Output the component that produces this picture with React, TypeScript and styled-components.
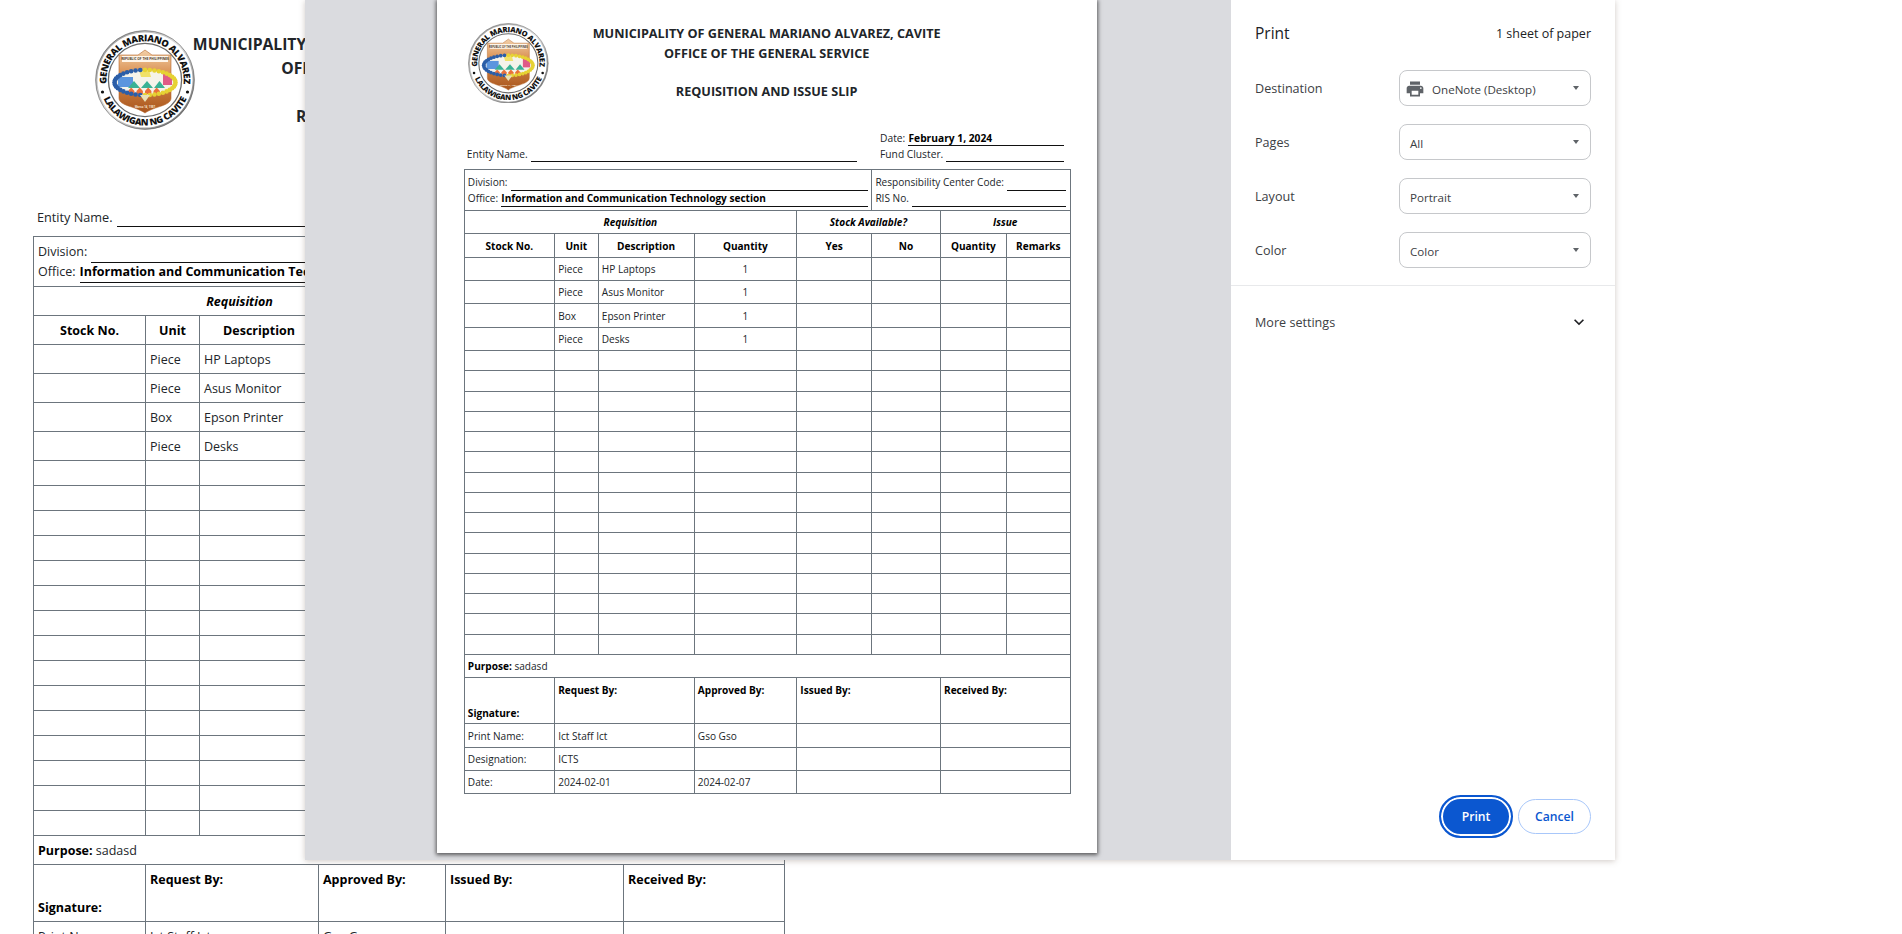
import React from "react";
import styled, { createGlobalStyle } from "styled-components";

const Global = createGlobalStyle`
  html, body { margin: 0; padding: 0; background: #fff; height: 934px; overflow: hidden; }
  #root { height: 934px; overflow: hidden; position: relative; }
  * { box-sizing: border-box; }
`;

const FONT = `"Open Sans", "Noto Sans", "Liberation Sans", sans-serif`;

const DocRoot = styled.div<{ $top: number }>`
  width: 800px;
  padding: ${(p) => p.$top}px 16px 0 33px;
  font: 12.7px/20px ${FONT};
  color: #212529;
`;
const Header = styled.header<{ $height: number }>`
  display: grid;
  height: ${(p) => p.$height}px;
  width: 751px;
`;
const SealSlot = styled.div<{ $left: number }>`
  grid-area: 1 / 1;
  justify-self: start;
  margin-left: ${(p) => p.$left}px;
`;
const Titles = styled.div`
  grid-area: 1 / 1;
  justify-self: center;
  padding-top: 2px;
  text-align: center;
  font-size: 15.7px;
  line-height: 24px;
  font-weight: 700;
  white-space: nowrap;
`;
const Meta = styled.div`
  display: flex;
  align-items: flex-end;
  justify-content: space-between;
  width: 751px;
  height: 40px;
  margin-bottom: 9px;
  padding-left: 4px;
`;
const MetaLeft = styled.div`
  width: 484px;
`;
const MetaRight = styled.div`
  width: 228px;
  margin-right: 7px;
`;
const Line = styled.div`
  display: flex;
  align-items: flex-start;
  height: 20px;
  gap: 4px;
  white-space: nowrap;
`;
const Fill = styled.span`
  flex: 1;
  min-width: 0;
  height: 20px;
  border-bottom: 1px solid #111;
  font-weight: 700;
  color: #000;
  overflow: hidden;
`;
const Stack = styled.div`
  padding-top: 1px;
`;
const Sheet = styled.table`
  width: 751px;
  border-collapse: collapse;
  table-layout: fixed;
  font-size: 12.5px;
  line-height: 18px;
`;
const Cell = styled.td<{ $h?: number; $center?: boolean; $strong?: boolean; $italic?: boolean; $top?: boolean }>`
  border: 1px solid #6c757d;
  padding: 1px 4px 0;
  height: ${(p) => p.$h ?? 25}px;
  text-align: ${(p) => (p.$center ? "center" : "left")};
  font-weight: ${(p) => (p.$strong ? 700 : 400)};
  font-style: ${(p) => (p.$italic ? "italic" : "normal")};
  vertical-align: ${(p) => (p.$top ? "top" : "middle")};
  color: ${(p) => (p.$strong ? "#000" : "#212529")};
  white-space: nowrap;
  overflow: hidden;
`;
const SigHead = styled.div`
  height: 54px;
  padding-top: 5px;
`;
const SigLabel = styled.div`
  height: 54px;
  padding-top: 33px;
`;
const Bold = styled.b`
  color: #000;
  font-weight: 700;
`;

const R_TOP = 38.6;
const dx = (R_TOP * Math.cos(Math.PI / 4)).toFixed(2);
const ringTop = `M ${(50 - +dx).toFixed(2)} ${(50 + +dx).toFixed(2)} A ${R_TOP} ${R_TOP} 0 1 1 ${(50 + +dx).toFixed(2)} ${(50 + +dx).toFixed(2)}`;
const ringBottom = "M 50 50 m -45.6 0 a 45.6 45.6 0 0 0 91.2 0";

function Seal({ size, id }: { size: number; id: string }) {
  const beads = Array.from({ length: 40 }, (_, i) => {
    const a = (i / 40) * Math.PI * 2;
    const cx = 50 + 30.5 * Math.cos(a);
    const cy = 52.5 + 12.6 * Math.sin(a);
    const c = Math.cos(a) < -0.05 ? "#2b5ea8" : "#e6d233";
    return <circle key={i} cx={cx} cy={cy} r={2.3} fill={c} />;
  });
  return (
    <svg width={size} height={size} viewBox="0 0 100 100" style={{ display: "block" }}>
      <defs>
        <linearGradient id={`${id}r`} x1="0" y1="0" x2="1" y2="1">
          <stop offset="0" stopColor="#8a8a8a" />
          <stop offset="0.5" stopColor="#e4e4e4" />
          <stop offset="1" stopColor="#555" />
        </linearGradient>
        <linearGradient id={`${id}s`} x1="0" y1="0" x2="0" y2="1">
          <stop offset="0" stopColor="#f2cfa8" />
          <stop offset="0.4" stopColor="#d88d4d" />
          <stop offset="1" stopColor="#a9551c" />
        </linearGradient>
        <path id={`${id}t`} d={ringTop} />
        <path id={`${id}b`} d={ringBottom} />
      </defs>
      <circle cx="50" cy="50" r="49.4" fill={`url(#${id}r)`} stroke="#444" strokeWidth="0.5" />
      <circle cx="50" cy="50" r="47.6" fill="#fff" />
      <circle cx="50" cy="50" r="36.6" fill="#fff" stroke="#6a6a6a" strokeWidth="1.3" />
      <text fontFamily={`"Open Sans", sans-serif`} fontWeight="800" fontSize="9.3" fill="#111" letterSpacing="-0.4">
        <textPath href={`#${id}t`} startOffset="50%" textAnchor="middle">GENERAL MARIANO ALVAREZ</textPath>
      </text>
      <text fontFamily={`"Open Sans", sans-serif`} fontWeight="800" fontSize="9.2" fill="#111" letterSpacing="-0.3">
        <textPath href={`#${id}b`} startOffset="50%" textAnchor="middle">LALAWIGAN NG CAVITE</textPath>
      </text>
      <circle cx="7.5" cy="62" r="1.6" fill="#111" />
      <circle cx="92.5" cy="62" r="1.6" fill="#111" />
      <path d="M24 25 H43 L50 20 L57 25 H76 V68 C76 76 60 76 50 83 C40 76 24 76 24 68 Z" fill={`url(#${id}s)`} stroke="#b76a30" strokeWidth="0.6" />
      <rect x="27" y="26" width="46" height="6" fill="#fff6ea" />
      <text x="50" y="30.4" textAnchor="middle" fontFamily={`"Open Sans", sans-serif`} fontWeight="700" fontSize="3.2" fill="#4a3526">REPUBLIC OF THE PHILIPPINES</text>
      <ellipse cx="50" cy="52.5" rx="30" ry="12.5" fill="#f5f3ea" />
      <path d="M23 47 h15 v10 h-15 z" fill="#5b95de" />
      <path d="M44 40 l2 7 h10 l-2 -7 z" fill="#f0e168" />
      <path d="M42 41 l3 -3 l3 3 z" fill="#3b8fd8" />
      <path d="M68 44 h9 v11 h-9 z" fill="#e05b87" />
      <path d="M33 58 l6 -7 l6 7 z" fill="#39b295" />
      <path d="M46 58 l6 -7 l6 7 z" fill="#39b295" />
      <path d="M59 58 l5.5 -7 l5.5 7 z" fill="#39b295" />
      <path d="M33 61 l3.2 -3.4 l3.2 3.4 v3 h-6.4 z" fill="#e9703a" />
      <path d="M41.5 61 l3.2 -3.4 l3.2 3.4 v3 h-6.4 z" fill="#e9703a" />
      <path d="M50 61 l3.2 -3.4 l3.2 3.4 v3 h-6.4 z" fill="#e9703a" />
      <path d="M58.5 61 l3.2 -3.4 l3.2 3.4 v3 h-6.4 z" fill="#e9703a" />
      {beads}
      <path d="M45 65 h10 l-5 7 z" fill="#e8e2b8" />
      <text x="50" y="77.6" textAnchor="middle" fontFamily={`"Open Sans", sans-serif`} fontWeight="700" fontSize="2.8" fill="#f6e2cf">Marso 14, 1981</text>
    </svg>
  );
}

const COLS = [112, 54, 119, 127, 93, 85, 82, 79];
const ITEMS = [
  ["Piece", "HP Laptops"],
  ["Piece", "Asus Monitor"],
  ["Box", "Epson Printer"],
  ["Piece", "Desks"],
];

type DocProps = { id: string; top: number; headerHeight: number; sealLeft: number; rowH: number };

function Document({ id, top, headerHeight, sealLeft, rowH }: DocProps) {
  return (
    <DocRoot $top={top}>
      <Header $height={headerHeight}>
        <SealSlot $left={sealLeft}>
          <Seal size={100} id={id} />
        </SealSlot>
        <Titles>
          MUNICIPALITY OF GENERAL MARIANO ALVAREZ, CAVITE
          <br />
          OFFICE OF THE GENERAL SERVICE
          <br />
          <br />
          REQUISITION AND ISSUE SLIP
        </Titles>
      </Header>
      <Meta>
        <MetaLeft>
          <Line>
            Entity Name. <Fill />
          </Line>
        </MetaLeft>
        <MetaRight>
          <Line>
            Date: <Fill>February 1, 2024</Fill>
          </Line>
          <Line>
            Fund Cluster. <Fill />
          </Line>
        </MetaRight>
      </Meta>
      <Sheet>
        <colgroup>
          {COLS.map((w, i) => (
            <col key={i} style={{ width: w }} />
          ))}
        </colgroup>
        <tbody>
          <tr>
            <Cell colSpan={5} $h={50}>
              <Stack>
                <Line>
                  Division: <Fill />
                </Line>
                <Line>
                  Office: <Fill>Information and Communication Technology section</Fill>
                </Line>
              </Stack>
            </Cell>
            <Cell colSpan={3} $h={50}>
              <Stack>
                <Line>
                  Responsibility Center Code: <Fill />
                </Line>
                <Line>
                  RIS No. <Fill />
                </Line>
              </Stack>
            </Cell>
          </tr>
          <tr>
            <Cell colSpan={4} $h={29} $center $strong $italic>Requisition</Cell>
            <Cell colSpan={2} $h={29} $center $strong $italic>Stock Available?</Cell>
            <Cell colSpan={2} $h={29} $center $strong $italic>Issue</Cell>
          </tr>
          <tr>
            {["Stock No.", "Unit", "Description", "Quantity", "Yes", "No", "Quantity", "Remarks"].map((h, i) => (
              <Cell key={i} $h={29} $center $strong>{h}</Cell>
            ))}
          </tr>
          {ITEMS.map(([u, d], i) => (
            <tr key={i}>
              <Cell $h={29} />
              <Cell>{u}</Cell>
              <Cell>{d}</Cell>
              <Cell $center>1</Cell>
              <Cell /><Cell /><Cell /><Cell />
            </tr>
          ))}
          {Array.from({ length: 15 }, (_, r) => (
            <tr key={r}>
              {COLS.map((_, c) => (
                <Cell key={c} $h={rowH} />
              ))}
            </tr>
          ))}
          <tr>
            <Cell colSpan={8} $h={29}>
              <Bold>Purpose:</Bold> sadasd
            </Cell>
          </tr>
          <tr>
            <Cell $h={57} $strong $top><SigLabel>Signature:</SigLabel></Cell>
            <Cell colSpan={2} $h={57} $strong $top><SigHead>Request By:</SigHead></Cell>
            <Cell $h={57} $strong $top><SigHead>Approved By:</SigHead></Cell>
            <Cell colSpan={2} $h={57} $strong $top><SigHead>Issued By:</SigHead></Cell>
            <Cell colSpan={2} $h={57} $strong $top><SigHead>Received By:</SigHead></Cell>
          </tr>
          <tr>
            <Cell $h={29}>Print Name:</Cell>
            <Cell colSpan={2}>Ict Staff Ict</Cell>
            <Cell>Gso Gso</Cell>
            <Cell colSpan={2} />
            <Cell colSpan={2} />
          </tr>
          <tr>
            <Cell $h={29}>Designation:</Cell>
            <Cell colSpan={2}>ICTS</Cell>
            <Cell />
            <Cell colSpan={2} />
            <Cell colSpan={2} />
          </tr>
          <tr>
            <Cell $h={29}>Date:</Cell>
            <Cell colSpan={2}>2024-02-01</Cell>
            <Cell>2024-02-07</Cell>
            <Cell colSpan={2} />
            <Cell colSpan={2} />
          </tr>
        </tbody>
      </Sheet>
    </DocRoot>
  );
}

const Dialog = styled.div`
  position: absolute;
  left: 305px;
  top: 0;
  width: 1310px;
  height: 860px;
  display: flex;
  background: #fff;
  box-shadow: 0 1px 6px rgba(120, 100, 90, 0.35);
`;
const Preview = styled.div`
  flex: 1;
  background: #dadbdf;
  padding-left: 132px;
  overflow: hidden;
`;
const Paper = styled.div`
  width: 660px;
  height: 853px;
  background: #fff;
  overflow: hidden;
  box-shadow: 0 1px 4px 1px rgba(0, 0, 0, 0.6);
`;
const Shrunk = styled.div`
  zoom: 0.807;
`;
const Side = styled.aside`
  width: 384px;
  display: flex;
  flex-direction: column;
  font-family: ${FONT};
  color: #202124;
`;
const SideHead = styled.div`
  display: flex;
  justify-content: space-between;
  align-items: center;
  height: 70px;
  padding: 0 24px 4px 24px;
  font-size: 12.5px;
`;
const SideTitle = styled.h1`
  margin: 0;
  font-size: 15.5px;
  font-weight: 400;
`;
const Settings = styled.div`
  display: flex;
  flex-direction: column;
  gap: 18px;
  padding: 0 24px 17px 24px;
  border-bottom: 1px solid #e8e9eb;
`;
const Row = styled.div`
  display: flex;
  justify-content: space-between;
  align-items: center;
  font-size: 12.6px;
  color: #3c4043;
`;
const Select = styled.div`
  position: relative;
  display: flex;
  align-items: center;
  gap: 7px;
  width: 192px;
  height: 36px;
  padding: 2px 10px 0 10px;
  border: 1px solid #c6c8cb;
  border-radius: 8px;
  font-size: 11.6px;
  color: #3c4043;
  &::after {
    content: "";
    position: absolute;
    right: 11px;
    top: 15px;
    border-left: 3.5px solid transparent;
    border-right: 3.5px solid transparent;
    border-top: 4px solid #5f6368;
  }
`;
const IconSelect = styled(Select)`
  padding-left: 5px;
`;
const More = styled.div`
  display: flex;
  justify-content: space-between;
  align-items: center;
  height: 72px;
  padding: 0 26px 0 24px;
  font-size: 12.6px;
  color: #3c4043;
`;
const Actions = styled.div`
  margin-top: auto;
  display: flex;
  justify-content: flex-end;
  align-items: center;
  gap: 5px;
  padding: 0 24px 22px 0;
`;
const PrimaryBtn = styled.button`
  width: 74px;
  height: 43px;
  border: 2px solid #0b57d0;
  border-radius: 22px;
  background: #0b57d0;
  box-shadow: inset 0 0 0 2px #fff;
  color: #fff;
  font: 600 12.2px ${FONT};
`;
const GhostBtn = styled.button`
  width: 73px;
  height: 35px;
  border: 1px solid #a8c7fa;
  border-radius: 18px;
  background: #fff;
  color: #0b57d0;
  font: 600 12.2px ${FONT};
`;

export default function App() {
  return (
    <>
      <Global />
      <Document id="bg" top={30} headerHeight={157} sealLeft={62} rowH={25} />
      <Dialog>
        <Preview>
          <Paper>
            <Shrunk>
              <Document id="fg" top={28} headerHeight={133} sealLeft={6} rowH={25.1} />
            </Shrunk>
          </Paper>
        </Preview>
        <Side>
          <SideHead>
            <SideTitle>Print</SideTitle>
            <span>1 sheet of paper</span>
          </SideHead>
          <Settings>
            <Row>
              Destination
              <IconSelect>
                <svg width="20" height="20" viewBox="0 0 24 24" fill="#5f6368">
                  <path d="M19 8H5c-1.66 0-3 1.34-3 3v6h4v4h12v-4h4v-6c0-1.66-1.34-3-3-3zm-3 11H8v-5h8v5zm3-7c-.55 0-1-.45-1-1s.45-1 1-1 1 .45 1 1-.45 1-1 1zm-1-9H6v4h12V3z" />
                </svg>
                OneNote (Desktop)
              </IconSelect>
            </Row>
            <Row>Pages<Select>All</Select></Row>
            <Row>Layout<Select>Portrait</Select></Row>
            <Row>Color<Select>Color</Select></Row>
          </Settings>
          <More>
            More settings
            <svg width="20" height="20" viewBox="0 0 24 24" fill="#202124">
              <path d="M7.41 8.59L12 13.17l4.59-4.58L18 10l-6 6-6-6z" />
            </svg>
          </More>
          <Actions>
            <PrimaryBtn>Print</PrimaryBtn>
            <GhostBtn>Cancel</GhostBtn>
          </Actions>
        </Side>
      </Dialog>
    </>
  );
}
